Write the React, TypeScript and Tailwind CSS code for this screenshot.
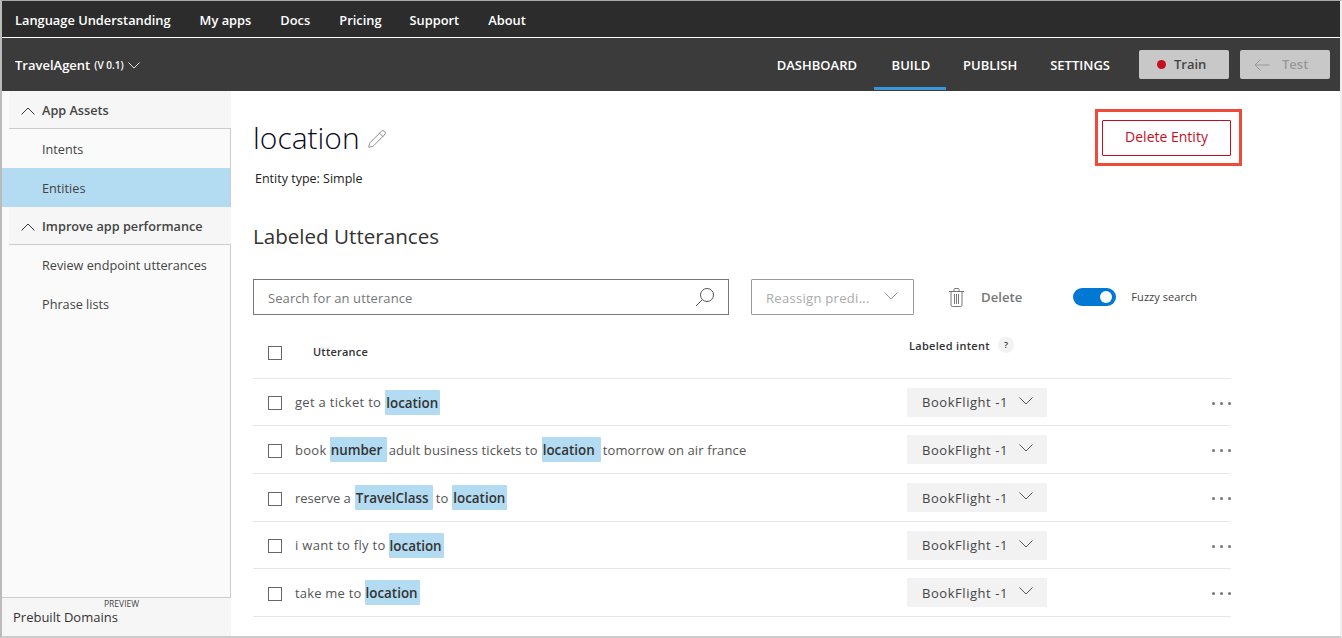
import { Pencil } from "lucide-react";

const font = { fontFamily: '"Open Sans", "Noto Sans", sans-serif' };

type Part = { t: string; entity?: boolean; w?: string; cls?: string };

const rows: Part[][] = [
  [{ t: "get a ticket to", cls: "tracking-[0.3px]" }, { t: "location", entity: true, w: "w-[55px]" }],
  [
    { t: "book", cls: "tracking-[0.3px] -mr-[1px]" },
    { t: "number", entity: true, w: "w-[57px]" },
    { t: "adult business tickets to", cls: "tracking-[0.13px] -ml-[2px]" },
    { t: "location", entity: true, w: "w-[59px]" },
    { t: "tomorrow on air france", cls: "tracking-[0.12px] -ml-[2px]" },
  ],
  [
    { t: "reserve a", cls: "tracking-[0px]" },
    { t: "TravelClass", entity: true, w: "w-[78px]" },
    { t: "to", cls: "-ml-[1px]" },
    { t: "location", entity: true, w: "w-[55px]" },
  ],
  [{ t: "i want to fly to", cls: "tracking-[0.3px] -mr-[1px]" }, { t: "location", entity: true, w: "w-[55px]" }],
  [{ t: "take me to", cls: "tracking-[0.2px] -mr-[1px]" }, { t: "location", entity: true, w: "w-[55px]" }],
];

const rowHeights = ["h-[47px]", "h-[48px]", "h-[48px]", "h-[47px]", "h-[48px]"];

// the stock chevrons come out too small at this stroke, so these are drawn
function Chev({ up, className }: { up?: boolean; className?: string }) {
  return (
    <svg viewBox="0 0 14 8" fill="none" stroke="currentColor" strokeWidth="1" className={className}>
      <path d={up ? "M0.5 7.5 L7 1 L13.5 7.5" : "M0.5 0.5 L7 7 L13.5 0.5"} />
    </svg>
  );
}

function Checkbox() {
  return <span className="block w-[14px] h-[14px] border border-[#666] bg-white shrink-0" />;
}

function Row({ parts, height }: { parts: Part[]; height: string }) {
  return (
    <div className={`flex items-center border-b border-[#e6e6e6] ${height}`}>
      <div className="ml-[15px] mr-[13px] mt-[2px]">
        <Checkbox />
      </div>
      <div className="flex items-center gap-[4px] w-[600px] text-[13px] text-[#555]">
        {parts.map((p, i) =>
          p.entity ? (
            <span
              key={i}
              className={`flex items-center h-[25px] pt-[2px] px-[1px] rounded-[1px] bg-[#b3dbf2] text-[13.4px] font-semibold text-[#333] ${p.w}`}
            >
              {p.t}
            </span>
          ) : (
            <span key={i} className={`mt-[2px] ${p.cls ?? ""}`}>
              {p.t}
            </span>
          ),
        )}
      </div>
      <div className="ml-[12px] flex items-center w-[140px] h-[29px] pl-[15px] pt-[2px] bg-[#f2f2f2] text-[13px] text-[#444] tracking-[0.55px]">
        <span>BookFlight -1</span>
        <Chev className="ml-[11px] w-[14px] h-[8px] text-[#555] -mt-[5px]" />
      </div>
      <div className="ml-auto flex gap-[5px] mt-[2px]">
        <span className="w-[3px] h-[3px] rounded-full bg-[#777]" />
        <span className="w-[3px] h-[3px] rounded-full bg-[#777]" />
        <span className="w-[3px] h-[3px] rounded-full bg-[#777]" />
      </div>
    </div>
  );
}

function SideItem({ label, active }: { label: string; active?: boolean }) {
  return (
    <div className={`flex items-center h-[39px] pl-[40px] pt-[2px] text-[12.7px] text-[#444] ${active ? "bg-[#b3dbf2]" : ""}`}>
      {label}
    </div>
  );
}

function SideHeader({ label }: { label: string }) {
  return (
    <div className="flex items-center h-[38px] pt-[2px] bg-[#f6f6f6] border-b border-[#ccc] ml-[7px] -mr-[1px] text-[12.7px] font-semibold text-[#444]">
      <Chev up className="ml-[12px] mr-[7px] w-[14px] h-[8px] text-[#333]" />
      {label}
    </div>
  );
}

export default function App() {
  return (
    <div
      className="relative w-[1342px] h-[638px] flex flex-col overflow-hidden bg-white border-t border-l-2 border-b-2 border-r-2 border-t-[#aaa] border-l-[#bbb] border-b-[#ccc] border-r-[#eee]"
      style={font}
    >
      <div className="flex items-center h-[36px] pl-[13px] pt-[3px] bg-[#2c2c2c] text-white text-[12.85px] font-semibold shrink-0">
        <span>Language Understanding</span>
        <span className="ml-[29px]">My apps</span>
        <span className="ml-[29px]">Docs</span>
        <span className="ml-[29px]">Pricing</span>
        <span className="ml-[28px]">Support</span>
        <span className="ml-[29px]">About</span>
      </div>
      <div className="flex items-center h-[54px] border-t border-white pl-[13px] bg-[#3b3b3b] text-white shrink-0">
        <span className="text-[13px] font-semibold mt-[2px]">TravelAgent</span>
        <span className="ml-[4px] text-[10px] font-semibold mt-[2px]">(V 0.1)</span>
        <Chev className="ml-[4px] mt-[2px] w-[12px] h-[7px]" />
        <div className="ml-auto flex items-center h-full text-[13px] font-semibold">
          <span className="mr-[17px] mt-[2px]">DASHBOARD</span>
          <span className="relative flex items-center justify-center h-full w-[72px] mr-[17px] pt-[2px] pl-[2px]">
            BUILD
            <span className="absolute left-0 right-0 bottom-[1px] h-[3px] bg-[#3a96dd]" />
          </span>
          <span className="mr-[33px] mt-[2px]">PUBLISH</span>
          <span className="mr-[29px] mt-[2px]">SETTINGS</span>
          <div className="flex items-center gap-[8px] w-[90px] h-[29px] pl-[18px] rounded-[2px] bg-[#c8c8c8] text-[#444]">
            <span className="w-[9px] h-[9px] rounded-full bg-[#c50f1f]" />
            Train
          </div>
          <div className="flex items-center gap-[12px] w-[90px] h-[29px] pl-[14px] ml-[11px] mr-[10px] rounded-[2px] bg-[#c8c8c8] text-[#999]">
            <svg viewBox="0 0 16 12" fill="none" stroke="currentColor" strokeWidth="1" className="w-[16px] h-[12px]">
              <path d="M15.5 6 H1 M6.5 0.5 L1 6 L6.5 11.5" />
            </svg>
            Test
          </div>
        </div>
      </div>
      <div className="flex flex-1 min-h-0">
        <aside className="flex flex-col w-[229px] bg-[#fafafa] border-r border-[#ccc] shrink-0">
          <SideHeader label="App Assets" />
          <SideItem label="Intents" />
          <SideItem label="Entities" active />
          <SideHeader label="Improve app performance" />
          <SideItem label="Review endpoint utterances" />
          <SideItem label="Phrase lists" />
          <div className="relative mt-auto h-[39px] -mr-[1px] bg-[#f6f6f6] border-t border-[#ccc] pl-[11px] pt-[10px] text-[13px] text-[#333] font-medium">
            <span className="absolute left-[102px] top-0 text-[8.5px] text-[#444]">PREVIEW</span>
            Prebuilt Domains
          </div>
        </aside>
        <main className="flex-1 min-w-0 pl-[22px] pr-[109px] text-[#222]">
          <div className="flex items-center mt-[24px] h-[44px]">
            <h1 className="text-[30px] font-light text-[#0a0a1a]">location</h1>
            <Pencil className="ml-[7px] mt-[3px] w-[20px] h-[20px] text-[#777]" strokeWidth={1} />
          </div>
          <p className="mt-[10px] ml-[2px] text-[12.5px] leading-[20px] text-[#222]">Entity type: Simple</p>
          <h2 className="mt-[32px] h-[30px] text-[20.6px] leading-[30px] text-[#333]">Labeled Utterances</h2>
          <div className="flex items-center mt-[28px] h-[36px]">
            <div className="flex items-center justify-between w-[476px] h-[36px] pl-[14px] pr-[13px] border border-[#777]">
              <span className="mt-[3px] text-[13px] text-[#777] tracking-[0.08px]">Search for an utterance</span>
              <svg viewBox="0 0 20 20" fill="none" stroke="#555" strokeWidth="1" className="w-[20px] h-[20px]">
                <circle cx="12" cy="8" r="6.5" />
                <path d="M7.3 12.7 L1 19" />
              </svg>
            </div>
            <div className="flex items-center w-[163px] h-[36px] ml-[22px] pl-[14px] border border-[#999] rounded-[1px] text-[13px] text-[#aaa] tracking-[0.3px]">
              <span className="mt-[3px]">Reassign predi...</span>
              <Chev className="ml-[14px] -mt-[3px] w-[14px] h-[8px] text-[#999]" />
            </div>
            <svg viewBox="0 0 15 19" fill="none" stroke="#777" strokeWidth="1" className="ml-[35px] w-[15px] h-[19px]">
              <path d="M0 3.5 H15 M5 3.5 V1.5 Q5 0.5 6 0.5 H9 Q10 0.5 10 1.5 V3.5 M2 3.5 V17 Q2 18.5 3.5 18.5 H11.5 Q13 18.5 13 17 V3.5 M5.5 6 V16 M7.5 6 V16 M9.5 6 V16" />
            </svg>
            <span className="ml-[17px] mt-[2px] text-[13.2px] font-semibold text-[#777]">Delete</span>
            <span className="relative ml-[51px] w-[43px] h-[18px] rounded-full bg-[#0078d4]">
              <span className="absolute right-[4px] top-[3px] w-[12px] h-[12px] rounded-full bg-white" />
            </span>
            <span className="ml-[15px] mt-[1px] text-[11px] text-[#444] tracking-[0.05px]">Fuzzy search</span>
          </div>
          <div className="relative flex items-center h-[64px] pt-[12px] border-b border-[#e6e6e6]">
            <div className="ml-[15px]">
              <Checkbox />
            </div>
            <span className="ml-[31px] text-[11px] font-semibold text-[#333] tracking-[0.2px]">Utterance</span>
            <span className="absolute left-[656px] top-[23px] text-[11px] font-semibold text-[#333] tracking-[0.3px]">
              Labeled intent
            </span>
            <span className="absolute left-[745px] top-[22px] flex items-center justify-center w-[16px] h-[16px] rounded-full bg-[#f2f2f2] text-[9px] font-semibold text-[#333]">
              ?
            </span>
          </div>
          {rows.map((parts, i) => (
            <Row key={i} parts={parts} height={rowHeights[i]} />
          ))}
        </main>
      </div>
      <div className="absolute left-[1093px] top-[108px] flex items-center w-[147px] h-[57px] pl-[4px] border-[3px] border-[#f04a3a] bg-white">
        <div className="flex items-center justify-center w-[129px] h-[36px] pb-[2px] border border-[#c50f1f] rounded-[1px] text-[14px] font-medium text-[#c50f1f]">
          Delete Entity
        </div>
      </div>
    </div>
  );
}
